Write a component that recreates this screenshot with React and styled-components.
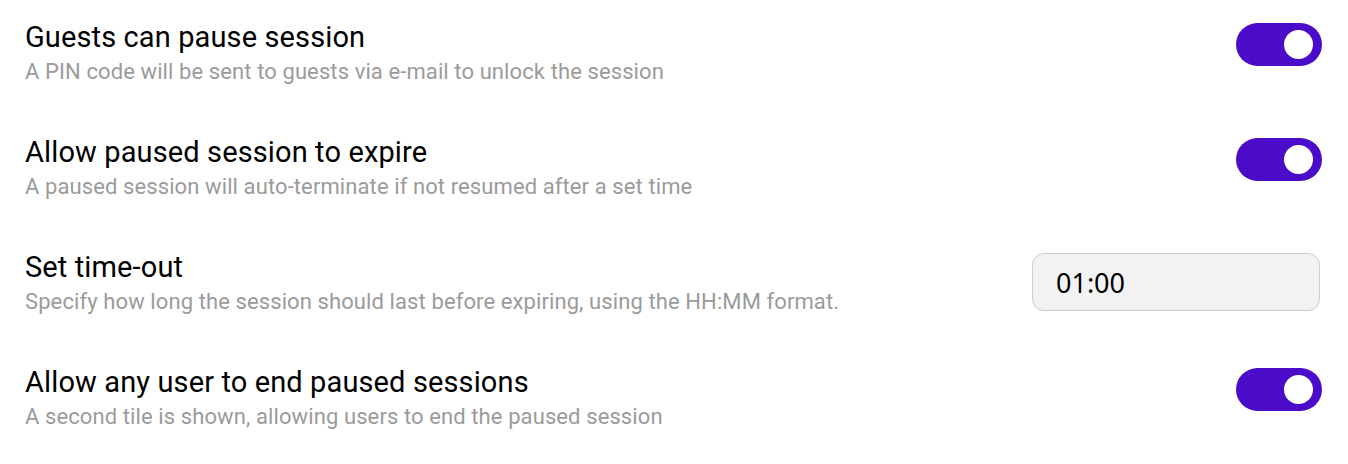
import React, { useState } from "react";
import styled, { createGlobalStyle } from "styled-components";

const GlobalStyle = createGlobalStyle`
  body {
    margin: 0;
    background: #ffffff;
    font-family: Roboto, "Liberation Sans", Arial, sans-serif;
  }
`;

const settings = [
  {
    id: "pause",
    title: "Guests can pause session",
    hint: "A PIN code will be sent to guests via e-mail to unlock the session",
    type: "toggle",
  },
  {
    id: "expire",
    title: "Allow paused session to expire",
    hint: "A paused session will auto-terminate if not resumed after a set time",
    type: "toggle",
  },
  {
    id: "timeout",
    title: "Set time-out",
    hint: "Specify how long the session should last before expiring, using the HH:MM format.",
    type: "time",
  },
  {
    id: "end",
    title: "Allow any user to end paused sessions",
    hint: "A second tile is shown, allowing users to end the paused session",
    type: "toggle",
  },
];

const App = () => {
  const [values, setValues] = useState({
    pause: true,
    expire: true,
    timeout: "01:00",
    end: true,
  });

  const flip = (id) => setValues((v) => ({ ...v, [id]: !v[id] }));

  return (
    <>
      <GlobalStyle />
      <List>
        {settings.map((s) => (
          <Row key={s.id}>
            <Text>
              <Title>{s.title}</Title>
              <Hint>{s.hint}</Hint>
            </Text>
            {s.type === "toggle" ? (
              <Switch
                type="button"
                $on={values[s.id]}
                onClick={() => flip(s.id)}
                aria-pressed={values[s.id]}
              >
                <Knob $on={values[s.id]} />
              </Switch>
            ) : (
              <TimeInput
                value={values[s.id]}
                onChange={(e) =>
                  setValues((v) => ({ ...v, [s.id]: e.target.value }))
                }
              />
            )}
          </Row>
        ))}
      </List>
    </>
  );
};

const List = styled.div`
  display: flex;
  flex-direction: column;
  padding: 20px 26px 0 25px;
`;

const Row = styled.div`
  display: flex;
  align-items: flex-start;
  justify-content: space-between;
  height: 115px;
`;

const Text = styled.div`
  display: flex;
  flex-direction: column;
  gap: 4px;
`;

const Title = styled.div`
  font-size: 29px;
  line-height: 34px;
  letter-spacing: 0.12px;
  color: #000000;
`;

const Hint = styled.div`
  font-size: 22px;
  line-height: 28px;
  letter-spacing: 0.1px;
  color: #9b9b9b;
`;

const Switch = styled.button`
  display: flex;
  align-items: center;
  justify-content: ${(p) => (p.$on ? "flex-end" : "flex-start")};
  box-sizing: border-box;
  width: 86px;
  height: 43px;
  margin-top: 3px;
  padding: 0 9px 0 7px;
  border: none;
  border-radius: 22px;
  background: ${(p) => (p.$on ? "#4a0cc9" : "#cfcfcf")};
  cursor: pointer;
`;

const Knob = styled.span`
  width: 29px;
  height: 29px;
  border-radius: 50%;
  background: #ffffff;
`;

const TimeInput = styled.input`
  box-sizing: border-box;
  width: 288px;
  height: 58px;
  margin: 3px 2px 0 0;
  padding: 0 0 0 23px;
  border: 1px solid #cccccc;
  border-radius: 12px;
  background: #f2f2f2;
  font-family: "Noto Sans", "Open Sans", sans-serif;
  font-size: 27px;
  color: #000000;
  outline: none;
`;

export default App;
